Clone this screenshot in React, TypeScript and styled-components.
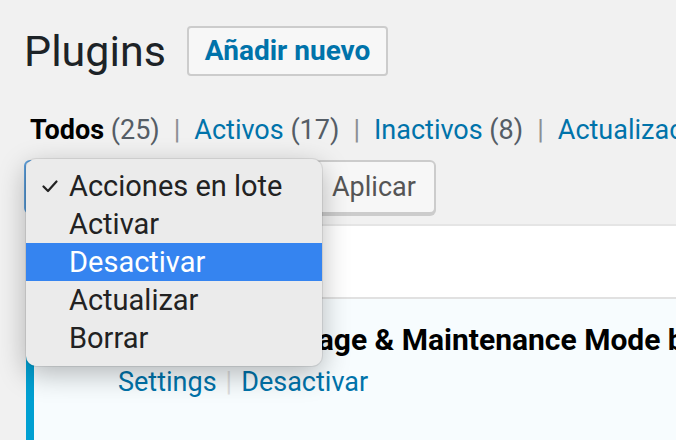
import * as React from 'react';
import styled, { createGlobalStyle } from 'styled-components';

const GlobalStyle = createGlobalStyle`
html, body {
  margin: 0;
  padding: 0;
  background: #f1f1f1;
  overflow: hidden;
}
body {
  font-family: Roboto, "Liberation Sans", Arial, sans-serif;
  color: #23282d;
}
`;

const Page = styled.div`
width: 676px;
height: 440px;
overflow: hidden;
padding-left: 26px;
box-sizing: border-box;
`;

const Header = styled.div`
display: flex;
align-items: center;
gap: 21px;
padding-top: 26px;
`;

const Title = styled.h1`
margin: 0 0 0 -2px;
font-size: 43px;
font-weight: 400;
line-height: 50px;
color: #1d2327;
`;

const AddButton = styled.a`
display: inline-block;
height: 50px;
box-sizing: border-box;
padding: 0 16px;
border: 2px solid #ccc;
border-radius: 4px;
background: #f7f7f7;
color: #0073aa;
font-size: 28px;
font-weight: 700;
line-height: 46px;
white-space: nowrap;
`;

const Filters = styled.ul`
display: flex;
margin: 36px 0 0 4px;
padding: 0;
list-style: none;
font-size: 27px;
line-height: 36px;
white-space: nowrap;
color: #555d66;
`;

const FilterItem = styled.li<{ $current?: boolean }>`
color: ${p => (p.$current ? '#000' : '#0073aa')};
font-weight: ${p => (p.$current ? 700 : 400)};
`;

const Count = styled.span`
color: #555d66;
font-weight: 400;
`;

const Bar = styled.span`
padding: 0 14px;
color: #8c8f94;
`;

const TableNav = styled.div`
position: relative;
display: flex;
gap: 10px;
margin-top: 12px;
height: 56px;
`;

const Select = styled.div`
width: 280px;
height: 54px;
box-sizing: border-box;
margin-left: -2px;
border: 2px solid #5b9dd9;
border-radius: 6px;
background: #fff;
`;

const Apply = styled.button`
height: 54px;
box-sizing: border-box;
padding: 0 18px 0 16px;
border: 2px solid #ccc;
border-radius: 6px;
background: #f7f7f7;
box-shadow: 0 2px 0 #ccc;
color: #555;
font-family: inherit;
font-size: 27px;
line-height: 50px;
`;

const Menu = styled.ul`
position: absolute;
top: -1px;
left: 0;
width: 296px;
margin: 0;
padding: 8px 0 9px;
list-style: none;
background: #ebebeb;
border-radius: 10px;
box-shadow: 0 0 0 1px rgba(0, 0, 0, 0.08), 0 8px 28px rgba(0, 0, 0, 0.28);
z-index: 5;
`;

const MenuItem = styled.li<{ $active?: boolean }>`
position: relative;
height: 38px;
padding-left: 43px;
font-size: 29px;
line-height: 38px;
color: ${p => (p.$active ? '#fff' : '#222')};
background: ${p => (p.$active ? '#3584f0' : 'transparent')};
`;

const Check = styled.svg`
position: absolute;
left: 16px;
top: 13px;
`;

const Table = styled.div`
margin-top: 8px;
width: 1000px;
background: #fff;
border-top: 2px solid #e5e5e5;
border-left: 2px solid #e5e5e5;
`;

const HeadRow = styled.div`
height: 71px;
border-bottom: 2px solid #e1e1e1;
`;

const PluginRow = styled.div`
height: 200px;
background: #f7fcfe;
border-left: 8px solid #00a0d2;
margin-left: -2px;
padding: 23px 0 0 84px;
box-sizing: border-box;
`;

const PluginName = styled.strong`
display: block;
margin-left: -8px;
font-size: 30px;
line-height: 36px;
font-weight: 700;
color: #000;
white-space: nowrap;
`;

const Actions = styled.div`
margin-top: 6px;
font-size: 27px;
line-height: 36px;
color: #0073aa;
`;

const ActionSep = styled.span`
padding: 0 9px;
color: #ddd;
`;

const menuItems = ['Acciones en lote', 'Activar', 'Desactivar', 'Actualizar', 'Borrar'];

export default function App() {
  return (
    <Page>
      <GlobalStyle />
      <Header>
        <Title>Plugins</Title>
        <AddButton>Añadir nuevo</AddButton>
      </Header>

      <Filters>
        <FilterItem $current>Todos <Count>(25)</Count></FilterItem>
        <Bar>|</Bar>
        <FilterItem>Activos <Count>(17)</Count></FilterItem>
        <Bar>|</Bar>
        <FilterItem>Inactivos <Count>(8)</Count></FilterItem>
        <Bar>|</Bar>
        <FilterItem>Actualización disponible <Count>(1)</Count></FilterItem>
      </Filters>

      <TableNav>
        <Select />
        <Apply>Aplicar</Apply>
        <Menu>
          {menuItems.map((item, i) => (
            <MenuItem key={item} $active={i === 2}>
              {i === 0 && (
                <Check width="16" height="13" viewBox="0 0 16 13">
                  <polyline points="1.5,6.5 6,11 14.5,1.5" fill="none" stroke="#222" strokeWidth="2.2" strokeLinecap="round" strokeLinejoin="round" />
                </Check>
              )}
              {item}
            </MenuItem>
          ))}
        </Menu>
      </TableNav>

      <Table>
        <HeadRow />
        <PluginRow>
          <PluginName>Coming Soon Page &amp; Maintenance Mode by SeedProd</PluginName>
          <Actions>
            Settings<ActionSep>|</ActionSep>Desactivar
          </Actions>
        </PluginRow>
      </Table>
    </Page>
  );
}
